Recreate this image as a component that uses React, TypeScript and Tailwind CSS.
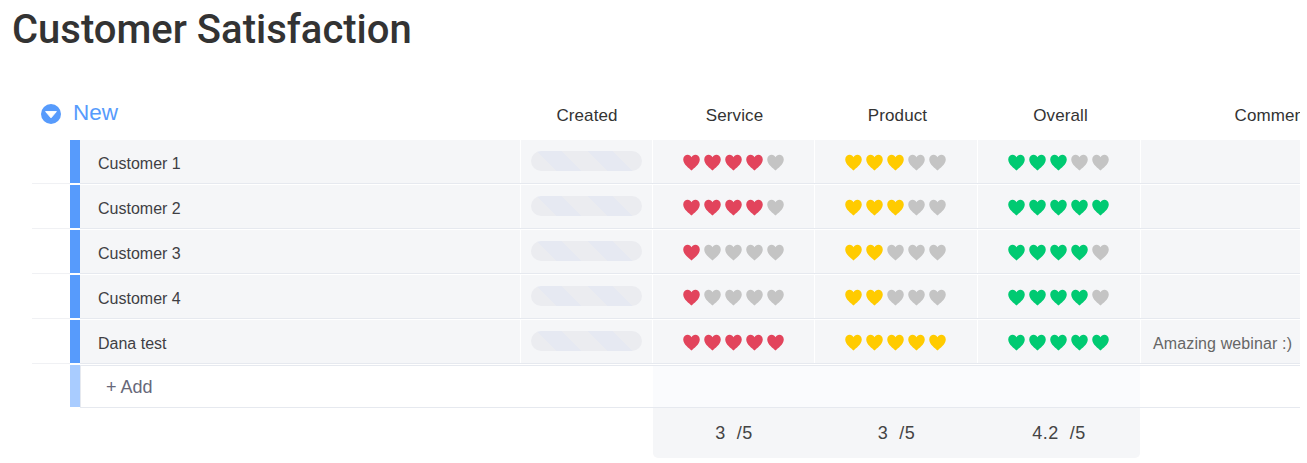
const rows = [
  { name: "Customer 1", service: 4, product: 3, overall: 3, comment: "" },
  { name: "Customer 2", service: 4, product: 3, overall: 5, comment: "" },
  { name: "Customer 3", service: 1, product: 2, overall: 4, comment: "" },
  { name: "Customer 4", service: 1, product: 2, overall: 4, comment: "" },
  { name: "Dana test", service: 5, product: 5, overall: 5, comment: "Amazing webinar :)" },
]

const Heart = ({ className }: { className: string }) => (
  <svg viewBox="0 0 24 24" className={`w-[17px] h-[17px] shrink-0 ${className}`} fill="currentColor">
    <path d="M12 23.4 C9 20.2 0.3 15 0.3 7.8 C0.3 3.6 3.4 1.2 6.6 1.2 C9 1.2 11 2.6 12 4.6 C13 2.6 15 1.2 17.4 1.2 C20.6 1.2 23.7 3.6 23.7 7.8 C23.7 15 15 20.2 12 23.4 Z" />
  </svg>
)

const Rating = ({ value, color, className }: { value: number; color: string; className?: string }) => (
  <div className={`w-full flex items-center justify-center gap-1 mt-[1px] ${className ?? ""}`}>
    {[1, 2, 3, 4, 5].map((n) => (
      <Heart key={n} className={n <= value ? color : "text-[#c4c4c4]"} />
    ))}
  </div>
)

const Cell = ({ width, children }: { width: string; children?: React.ReactNode }) => (
  <div className={`${width} shrink-0 h-full bg-[#f5f6f8] flex items-center`}>{children}</div>
)

const App = () => {
  return (
    <div className="w-[1300px] h-[463px] overflow-hidden bg-white text-[#323338] font-['Liberation_Sans',sans-serif]">
      <h1 className="h-[92px] pl-3 pt-[6px] text-[40px] leading-[48px] font-medium font-['Roboto',sans-serif] text-[#333333]">
        Customer Satisfaction
      </h1>

      <div className="flex items-center h-[48px] w-[1500px]">
        <div className="w-[521px] shrink-0 flex items-center pl-[41px] pb-[5px]">
          <svg viewBox="0 0 20 20" className="w-5 h-5">
            <circle cx="10" cy="10" r="10" fill="#579bfc" />
            <path d="M4.6 7.6 H15.4 L10 13.8 Z" fill="#fff" strokeLinejoin="round" stroke="#fff" />
          </svg>
          <span className="ml-3 text-[22.5px] leading-none text-[#579bfc]">New</span>
        </div>
        {[
          ["w-[132px]", "Created"],
          ["w-[163px]", "Service"],
          ["w-[163px]", "Product"],
          ["w-[163px]", "Overall"],
          ["w-[268px]", "Comments"],
        ].map(([w, label]) => (
          <div key={label} className={`${w} shrink-0 text-center text-[17px] tracking-[0.1px] text-[#333333]`}>
            {label}
          </div>
        ))}
      </div>

      {rows.map((row) => (
        <div key={row.name} className="flex h-[45px] w-[1500px]">
          <div className="w-[38px] ml-8 shrink-0 h-[44px] border-b border-[#f0f1f4]" />
          <div className="w-[10px] shrink-0 h-[43px] bg-[#579bfc]" />
          <div className="flex-1 h-[44px] border-b border-[#e6e9ef] flex gap-px">
            <Cell width="w-[440px]">
              <span className="pl-[18px] pt-[5px] text-[16px] text-[#3f3f44]">{row.name}</span>
            </Cell>
            <Cell width="w-[131px]">
              <div className="ml-[10px] -mt-[2px] w-[111px] h-5 rounded-[10px] bg-[repeating-linear-gradient(45deg,#ebecf0_0px,#ebecf0_18px,#e6e9f2_18px,#e6e9f2_36px)]" />
            </Cell>
            <Cell width="w-[161px]"><Rating value={row.service} color="text-[#e2445c]" /></Cell>
            <Cell width="w-[162px]"><Rating value={row.product} color="text-[#ffcb00]" className="pr-[2px]" /></Cell>
            <Cell width="w-[162px]"><Rating value={row.overall} color="text-[#00ca72]" className="pr-[2px]" /></Cell>
            <Cell width="w-[300px]">
              <span className="pl-3 pt-[5px] text-[16px] tracking-[0.12px] text-[#666666]">{row.comment}</span>
            </Cell>
          </div>
        </div>
      ))}

      <div className="flex ml-[70px] h-[43px]">
        <div className="w-[10px] shrink-0 h-[42px] bg-[#a9ccff]" />
        <div className="flex-1 flex border-y border-[#e6e9ef] border-l">
          <div className="w-[572px] shrink-0 pl-[25px] pt-[2px] flex items-center text-[18px] text-[#676879]">+ Add</div>
          <div className="w-[487px] shrink-0 bg-[#fafbfd]" />
        </div>
      </div>

      <div className="flex pl-[653px]">
        {[
          ["w-[162px] rounded-bl-[5px]", "3 /5"],
          ["w-[163px]", "3 /5"],
          ["w-[162px] rounded-br-[5px]", "4.2 /5"],
        ].map(([w, total], i) => (
          <div key={i} className={`${w} h-[50px] bg-[#f5f6f8] flex items-center justify-center text-[18px] text-[#444444] tracking-[0.5px] whitespace-pre`}>
            {total.replace(" /", "  /")}
          </div>
        ))}
      </div>
    </div>
  )
}

export default App
